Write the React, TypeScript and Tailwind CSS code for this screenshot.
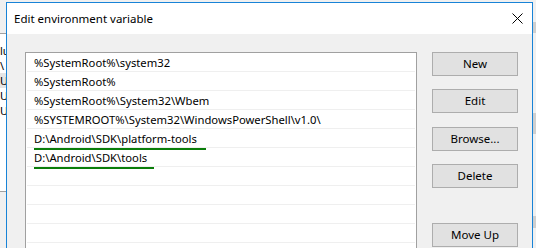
const font = { fontFamily: '"Segoe UI", "Noto Sans", "Liberation Sans", sans-serif' };

const paths = [
  { text: "%SystemRoot%\\system32" },
  { text: "%SystemRoot%" },
  { text: "%SystemRoot%\\System32\\Wbem" },
  { text: "%SYSTEMROOT%\\System32\\WindowsPowerShell\\v1.0\\" },
  { text: "D:\\Android\\SDK\\platform-tools", mark: "w-[172px]" },
  { text: "D:\\Android\\SDK\\tools", mark: "w-[120px]" },
  { text: "" },
  { text: "" },
  { text: "" },
  { text: "" },
];

const buttons = [
  { label: "New", gap: "mt-0" },
  { label: "Edit", gap: "mt-[13px]" },
  { label: "Browse...", gap: "mt-[14px]" },
  { label: "Delete", gap: "mt-[13px]" },
  { label: "Move Up", gap: "mt-[35px]" },
];

const BehindLeft = () => (
  <div className="w-[6px] shrink-0 flex flex-col overflow-hidden text-[11px] text-black">
    <div className="h-[34px] shrink-0 bg-[#f0f0f0] border-b border-[#a0a0a0]" />
    <div className="h-[157px] shrink-0 bg-white pt-[9px] leading-[15px] whitespace-nowrap">
      <div>lu</div>
      <div>\</div>
      <div className="bg-[#e5e5e5]">U</div>
      <div>U</div>
      <div>U</div>
    </div>
    <div className="flex-1 bg-[#f0f0f0] border-t border-[#a0a0a0]" />
  </div>
);

const BehindRight = () => (
  <div className="flex-1 flex flex-col bg-[#f0f0f0]">
    <div className="h-[22px] shrink-0" />
    <div className="h-[11px] shrink-0 bg-[#cfcfcf]" />
    <div className="h-[80px] shrink-0" />
    <div className="h-[21px] shrink-0 bg-[#cfcfcf]" />
    <div className="h-[82px] shrink-0" />
    <div className="h-[12px] shrink-0 bg-[#cfcfcf]" />
  </div>
);

export default function App() {
  return (
    <div className="w-[536px] h-[248px] overflow-hidden flex items-start bg-[#f0f0f0]" style={font}>
      <BehindLeft />
      <div className="w-[527px] shrink-0 mt-[2px] border border-[#1883d7] border-b-0 flex flex-col bg-[#f0f0f0]">
        <div className="h-[31px] shrink-0 bg-white flex items-center justify-between pl-[7px] pr-[9px]">
          <span className="text-[11.5px] text-black">Edit environment variable</span>
          <svg width="11" height="11" viewBox="0 0 11 11" className="mb-[1px]">
            <path d="M0.5 0.5 L10.5 10.5 M10.5 0.5 L0.5 10.5" stroke="#000" strokeWidth="1" />
          </svg>
        </div>
        <div className="flex shrink-0 pt-[18px] pl-[18px]">
          <div className="w-[392px] h-[200px] border border-[#a0a0a0] border-b-0 bg-white px-[1px]">
            {paths.map((p, i) => (
              <div
                key={i}
                className="h-[19px] border-b border-[#efefef] pl-[7px] pt-[1px] text-[11.25px] leading-[17px] text-black whitespace-nowrap"
              >
                <span className="relative">
                  {p.text}
                  {p.mark && (
                    <span className={`absolute left-0 top-[17px] h-[2px] bg-[#0a7d0a] ${p.mark}`} />
                  )}
                </span>
              </div>
            ))}
          </div>
          <div className="ml-[15px] flex flex-col">
            {buttons.map((b) => (
              <button
                key={b.label}
                className={`w-[86px] h-[24px] bg-[#e1e1e1] border border-[#adadad] text-[11.5px] text-black ${b.gap}`}
              >
                {b.label}
              </button>
            ))}
          </div>
        </div>
      </div>
      <BehindRight />
    </div>
  );
}
